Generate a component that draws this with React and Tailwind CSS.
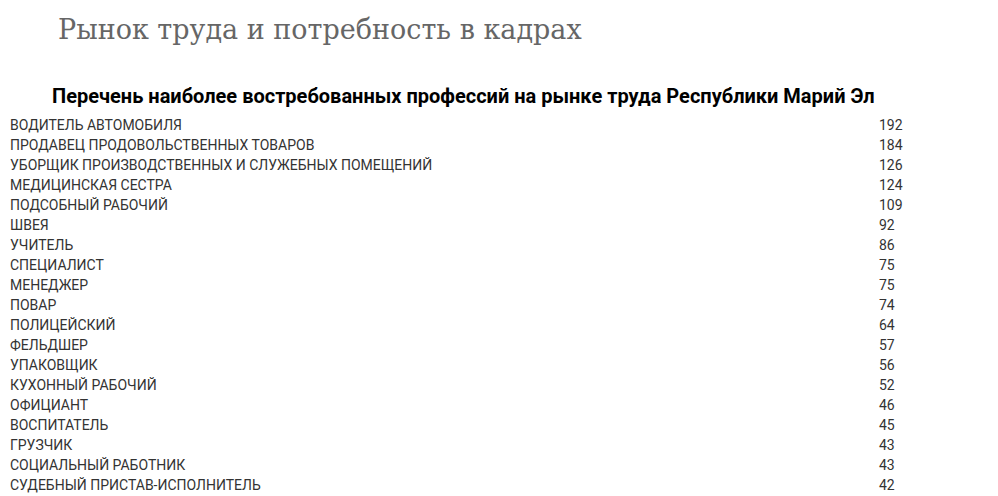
import React from "react";

const rows = [
  ["ВОДИТЕЛЬ АВТОМОБИЛЯ", 192],
  ["ПРОДАВЕЦ ПРОДОВОЛЬСТВЕННЫХ ТОВАРОВ", 184],
  ["УБОРЩИК ПРОИЗВОДСТВЕННЫХ И СЛУЖЕБНЫХ ПОМЕЩЕНИЙ", 126],
  ["МЕДИЦИНСКАЯ СЕСТРА", 124],
  ["ПОДСОБНЫЙ РАБОЧИЙ", 109],
  ["ШВЕЯ", 92],
  ["УЧИТЕЛЬ", 86],
  ["СПЕЦИАЛИСТ", 75],
  ["МЕНЕДЖЕР", 75],
  ["ПОВАР", 74],
  ["ПОЛИЦЕЙСКИЙ", 64],
  ["ФЕЛЬДШЕР", 57],
  ["УПАКОВЩИК", 56],
  ["КУХОННЫЙ РАБОЧИЙ", 52],
  ["ОФИЦИАНТ", 46],
  ["ВОСПИТАТЕЛЬ", 45],
  ["ГРУЗЧИК", 43],
  ["СОЦИАЛЬНЫЙ РАБОТНИК", 43],
  ["СУДЕБНЫЙ ПРИСТАВ-ИСПОЛНИТЕЛЬ", 42],
];

export default function App() {
  return (
    <div className="w-[998px] h-[496px] overflow-hidden bg-white">
      <h1 className="pl-[58px] pt-[10px] text-[27px] leading-[40px] text-[#666] font-['DejaVu_Serif',serif] font-light">
        Рынок труда и потребность в кадрах
      </h1>
      <h2 className="mt-[33px] pl-[52px] text-[20px] leading-[26px] font-bold text-black font-['Roboto',sans-serif]">
        Перечень наиболее востребованных профессий на рынке труда Республики Марий Эл
      </h2>
      <div className="mt-[6px] pl-[10px] font-['Roboto',sans-serif] text-[14px] text-[#333]">
        {rows.map(([name, n]) => (
          <div key={name} className="grid grid-cols-[869px_1fr] h-[20px] leading-[20px]">
            <span>{name}</span>
            <span>{n}</span>
          </div>
        ))}
      </div>
    </div>
  );
}
